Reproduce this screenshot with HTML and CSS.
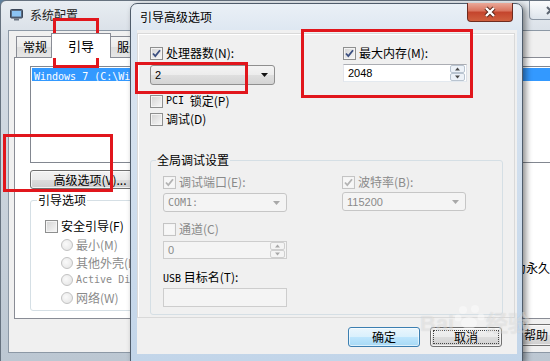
FILE: index.html
```html
<!DOCTYPE html>
<html lang="zh-CN">
<head>
  <meta charset="UTF-8">
  <title>系统配置 - 引导高级选项</title>
  <link rel="stylesheet" href="styles.css">
</head>
<body>
  <div class="desktop">

    <div class="win back">
      <div class="titlebar">
        <svg class="app-icon" width="13" height="13" viewBox="0 0 13 13">
          <rect x="0.5" y="1.5" width="12" height="8.5" rx="1" fill="#5a6a80" stroke="#3a4658"/>
          <rect x="2" y="3" width="9" height="5.5" fill="#8cc4f4"/>
          <rect x="4" y="10.5" width="5" height="2" fill="#6c7684"/>
        </svg>
        <span class="title">系统配置</span>
        <span class="cap-close">
          <svg width="11" height="9" viewBox="0 0 11 9"><path d="M2 1l7 7M9 1L2 8" stroke="#5b6470" stroke-width="2"/></svg>
        </span>
      </div>
      <div class="client">
        <div class="tabs">
          <span class="tab">常规</span>
          <span class="tab on">引导</span>
          <span class="tab">服务</span>
          <span class="tab">启动</span>
          <span class="tab">工具</span>
        </div>
        <div class="tabpage">
          <div class="listbox">
            <div class="item sel"><span class="mono">Windows 7 (C:\Windows) : </span>当前操作系统; 默认操作系统</div>
          </div>
          <div class="btnrow">
            <button class="btn adv">高级选项(<u>V</u>)...</button>
            <button class="btn">设为默认值(S)</button>
            <button class="btn">删除(D)</button>
          </div>
          <div class="bootrow">
            <fieldset class="group boot">
              <legend>引导选项</legend>
              <label class="check"><span class="cb"></span>安全引导(F)</label>
              <div class="radios">
                <label class="radio"><span class="rb"></span>最小(M)</label>
                <label class="radio"><span class="rb"></span>其他外壳(L)</label>
                <label class="radio"><span class="rb"></span><span class="mono">Active Directory</span>修复(V)</label>
                <label class="radio"><span class="rb"></span>网络(W)</label>
              </div>
            </fieldset>
            <div class="bootside">
              <label class="check"><span class="cb"></span>使所有引导设置成为永久(K)</label>
            </div>
          </div>
        </div>
        <div class="footer">
          <button class="btn">确定</button>
          <button class="btn">取消</button>
          <button class="btn">应用(A)</button>
          <button class="btn help">帮助</button>
        </div>
      </div>
    </div>

    <div class="win dlg">
      <div class="titlebar">
        <span class="title">引导高级选项</span>
        <span class="close">
          <svg width="14" height="12" viewBox="0 0 14 12">
            <path d="M3 2l8 8M11 2l-8 8" stroke="#5a2418" stroke-width="4.2"/>
            <path d="M3 2l8 8M11 2l-8 8" stroke="#fff" stroke-width="2.4"/>
          </svg>
        </span>
      </div>
      <div class="client">
        <div class="panel">
          <div class="cols top">
            <div class="col">
              <label class="check">
                <span class="cb"><svg viewBox="0 0 11 11"><path d="M2 5.5l2.3 2.6L9 2.3" fill="none" stroke="#3b4f80" stroke-width="1.8"/></svg></span>处理器数(N):
              </label>
              <div class="combo cpu">
                <span>2</span>
                <svg width="7" height="4" viewBox="0 0 7 4"><path d="M0 0h7L3.5 4z" fill="#111"/></svg>
              </div>
              <label class="check pci"><span class="cb"></span><span class="mono">PCI</span>&nbsp;锁定(P)</label>
              <label class="check dbg"><span class="cb"></span>调试(D)</label>
            </div>
            <div class="col">
              <label class="check">
                <span class="cb"><svg viewBox="0 0 11 11"><path d="M2 5.5l2.3 2.6L9 2.3" fill="none" stroke="#3b4f80" stroke-width="1.8"/></svg></span>最大内存(M):
              </label>
              <div class="spin mem">
                <span>2048</span>
                <svg width="15" height="16" viewBox="0 0 15 16">
                  <rect x="0.5" y="0.5" width="14" height="7" rx="1.5" fill="#edf2f8" stroke="#b9c4d0"/>
                  <rect x="0.5" y="8.5" width="14" height="7" rx="1.5" fill="#edf2f8" stroke="#b9c4d0"/>
                  <path d="M5 5.5l2.5-3 2.5 3z" fill="#4a4a4a"/>
                  <path d="M5 10.5l2.5 3 2.5-3z" fill="#4a4a4a"/>
                </svg>
              </div>
            </div>
          </div>

          <fieldset class="group gd">
            <legend>全局调试设置</legend>
            <div class="cols inner">
              <div class="col">
                <label class="check off">
                  <span class="cb"><svg viewBox="0 0 11 11"><path d="M2 5.5l2.3 2.6L9 2.3" fill="none" stroke="#b4b4b4" stroke-width="1.8"/></svg></span>调试端口(E):
                </label>
                <div class="combo off port">
                  <span class="mono">COM1:</span>
                  <svg width="7" height="4" viewBox="0 0 7 4"><path d="M0 0h7L3.5 4z" fill="#a8a8a8"/></svg>
                </div>
                <label class="check off chan"><span class="cb"></span>通道(C)</label>
                <div class="spin off chanbox">
                  <span>0</span>
                  <svg width="15" height="16" viewBox="0 0 15 16">
                    <rect x="0.5" y="0.5" width="14" height="7" rx="1.5" fill="#f4f4f4" stroke="#cfcfcf"/>
                    <rect x="0.5" y="8.5" width="14" height="7" rx="1.5" fill="#f4f4f4" stroke="#cfcfcf"/>
                    <path d="M5 5.5l2.5-3 2.5 3z" fill="#a8a8a8"/>
                    <path d="M5 10.5l2.5 3 2.5-3z" fill="#a8a8a8"/>
                  </svg>
                </div>
                <div class="lbl usb"><span class="mono">USB</span>&nbsp;目标名(T):</div>
                <div class="textbox off usbbox"></div>
              </div>
              <div class="col">
                <label class="check off">
                  <span class="cb"><svg viewBox="0 0 11 11"><path d="M2 5.5l2.3 2.6L9 2.3" fill="none" stroke="#b4b4b4" stroke-width="1.8"/></svg></span>波特率(B):
                </label>
                <div class="combo off baud">
                  <span>115200</span>
                  <svg width="7" height="4" viewBox="0 0 7 4"><path d="M0 0h7L3.5 4z" fill="#a8a8a8"/></svg>
                </div>
              </div>
            </div>
          </fieldset>
        </div>
        <div class="dlgbtns">
          <button class="btn default">确定</button>
          <button class="btn focus">取消</button>
        </div>
      </div>
    </div>

    <div class="watermark">Bai<svg width="30" height="26" viewBox="0 0 30 26">
        <circle cx="8" cy="6" r="4"/><circle cx="20" cy="5" r="4"/><circle cx="3" cy="14" r="3.5"/><circle cx="26" cy="13" r="3.5"/><ellipse cx="14" cy="19" rx="8" ry="6"/>
      </svg>经验</div>

    <div class="mark m-tab"></div>
    <div class="mark m-adv"></div>
    <div class="mark m-cpu"></div>
    <div class="mark m-mem"></div>
  </div>
</body>
</html>
```

FILE: styles.css
```css
* {
  box-sizing: border-box;
}
body {
  margin: 0;
  background: #5f7f9c;
  font: 12px/14px "Noto Sans CJK SC", "Liberation Sans", sans-serif;
  color: #000;
}
button {
  font: inherit;
  color: inherit;
  padding: 0;
}
u {
  text-decoration: none;
}
.mono {
  font-family: "DejaVu Sans Mono", "Liberation Mono", monospace;
  font-size: 10px;
}
.desktop {
  position: relative;
  width: 550px;
  height: 361px;
  overflow: hidden;
}

/* windows */
.win {
  position: absolute;
  display: flex;
  flex-direction: column;
}
.titlebar {
  display: flex;
  align-items: flex-start;
  flex: none;
}
.title {
  white-space: nowrap;
}

.back {
  left: 0;
  top: 0;
  width: 580px;
  height: 362px;
  padding: 0 7px 8px;
  border: 1px solid #66727f;
  border-radius: 6px 6px 0 0;
  background: linear-gradient(#e8edf2, #d6dde5 40px, #bcc7d2);
}
.back .titlebar {
  height: 29px;
}
.app-icon {
  margin: 7px 7px 0 2px;
}
.back .title {
  line-height: 28px;
  color: #222;
}
.cap-close {
  margin-left: auto;
  width: 43px;
  height: 19px;
  display: flex;
  align-items: center;
  justify-content: center;
  border: 1px solid #8995a3;
  border-top: 0;
  border-radius: 0 0 4px 4px;
  background: linear-gradient(rgba(255,255,255,.8), rgba(220,228,236,.6));
}
.back .client {
  flex: 1;
  display: flex;
  flex-direction: column;
  background: #f0f0f0;
  border: 1px solid #8c98a5;
  padding-left: 5px;
}

/* tab control */
.tabs {
  display: flex;
  align-items: flex-end;
  height: 26px;
  padding-left: 2px;
}
.tab {
  height: 21px;
  line-height: 19px;
  padding: 0 6px;
  border: 1px solid #898c95;
  border-bottom: 0;
  margin-right: -1px;
  white-space: nowrap;
  background: linear-gradient(#f4f4f4, #ebebeb 50%, #dedede 50%, #e6e6e6);
}
.tab.on {
  position: relative;
  z-index: 1;
  height: 25px;
  width: 60px;
  margin: 0 -1px -1px -2px;
  text-align: center;
  line-height: 24px;
  font-size: 13px;
  background: #fff;
}
.tab.on + .tab {
  width: 50px;
}
.tabpage {
  height: 262px;
  flex: none;
  border: 1px solid #898c95;
  background: #fff;
  padding: 8px 15px;
}
.listbox {
  height: 97px;
  border: 1px solid #828790;
  background: #fff;
  padding: 1px;
}
.item {
  height: 13px;
  line-height: 13px;
  padding-left: 2px;
  white-space: nowrap;
  overflow: hidden;
}
.item.sel {
  background: #3399ff;
  color: #fff;
}
.btnrow {
  display: flex;
  gap: 8px;
  margin-top: 7px;
}
.btn {
  height: 19px;
  border: 1px solid #707070;
  border-radius: 3px;
  background: linear-gradient(#f2f2f2, #ebebeb 50%, #dddddd 50%, #cfcfcf);
  box-shadow: inset 0 0 0 1px rgba(255,255,255,.7);
  white-space: nowrap;
}
.btn.adv {
  width: 120px;
}
.btnrow .btn {
  padding: 0 14px;
}
.bootrow {
  display: flex;
  margin-top: 4px;
}

/* group boxes */
.group {
  margin: 0;
  min-width: 0;
  border: 1px solid #d5dfe5;
  border-radius: 3px;
}
.group legend {
  padding: 0 1px;
  line-height: 14px;
}
.boot {
  width: 215px;
  flex: none;
  padding: 12px 8px 5px 6px;
}
.boot > .check {
  margin-left: 8px;
}
.radios {
  margin-left: 24px;
  display: flex;
  flex-direction: column;
  gap: 3.5px;
  margin-top: 5px;
  white-space: nowrap;
}
.radio {
  display: flex;
  align-items: center;
  gap: 3px;
  height: 14px;
  color: #8a8a8a;
}
.rb {
  flex: none;
  width: 12px;
  height: 12px;
  border-radius: 50%;
  border: 1px solid #c2c2c2;
  background: radial-gradient(circle at 40% 40%, #fafafa, #e2e2e2);
}
.bootside {
  flex: 1;
  padding: 68px 0 0 157px;
  white-space: nowrap;
}
.footer {
  flex: 1;
  display: flex;
  justify-content: flex-end;
  align-items: flex-start;
  gap: 6px;
  padding: 5px 2px 0 0;
}
.footer .btn {
  width: 66px;
  height: 22px;
}

/* checkbox */
.check {
  display: flex;
  align-items: center;
  gap: 3px;
  height: 14px;
  white-space: nowrap;
}
.cb {
  flex: none;
  width: 13px;
  height: 13px;
  border: 1px solid #8e8f8f;
  background: linear-gradient(135deg, #d3d3d3, #f8f8f8);
  box-shadow: inset 0 0 0 1px #f4f4f4;
  display: flex;
  align-items: center;
  justify-content: center;
}
.cb svg {
  width: 11px;
  height: 11px;
}
.check.off {
  color: #8a8a8a;
}
.check.off .cb {
  border-color: #c4c4c4;
  background: #f7f7f7;
}

/* front dialog */
.dlg {
  left: 130px;
  top: 3px;
  width: 393px;
  height: 359px;
  padding: 0 5px 7px 6px;
  border: 1px solid #4f5c6b;
  border-radius: 7px 7px 0 0;
  background: linear-gradient(#eaf0f6, #dce6f1 30px, #c2d5e9);
  box-shadow: 3px 2px 6px rgba(0,0,0,.45);
}
.dlg .titlebar {
  height: 26px;
}
.dlg .title {
  padding-left: 3px;
  line-height: 26px;
}
.close {
  margin: -1px 4px 0 auto;
  width: 46px;
  height: 19px;
  display: flex;
  align-items: center;
  justify-content: center;
  border: 1px solid #6e2b20;
  border-top: 0;
  border-radius: 0 0 4px 4px;
  background: linear-gradient(#eaa899, #d9735d 45%, #c4442c 50%, #d0603f);
}
.dlg .client {
  flex: 1;
  display: flex;
  flex-direction: column;
  background: #f0f0f0;
}
.panel {
  margin: 3px 2px 0 0;
  border: 1px solid #d9d9d9;
  box-shadow: inset 1px 1px #fff;
  padding: 12px 11px 2px 12px;
}
.cols {
  display: grid;
  align-items: start;
}
.cols.top {
  grid-template-columns: 125px 124px;
  column-gap: 68px;
}
.cols.inner {
  grid-template-columns: 124px 124px;
  column-gap: 55px;
}
.col {
  display: flex;
  flex-direction: column;
}

.combo,
.spin,
.textbox {
  display: flex;
  align-items: center;
  justify-content: space-between;
  padding: 0 4px;
  white-space: nowrap;
}
.combo {
  border: 1px solid #8f8f8f;
  border-radius: 3px;
  background: linear-gradient(#f4f4f4, #ececec 50%, #dfdfdf 50%, #d4d4d4);
  font-family: "Liberation Sans", sans-serif;
  font-size: 11px;
}
.combo svg {
  margin-right: 2px;
}
.combo.off {
  border-color: #c6c6c6;
  background: #f4f4f4;
  color: #8a8a8a;
}
.spin {
  border: 1px solid #abadb3;
  border-color: #abadb3 #dbdfe6 #e3e9ef #e2e3ea;
  background: #fff;
  padding-right: 1px;
  font-family: "Liberation Sans", sans-serif;
  font-size: 11px;
}
.spin.off,
.textbox.off {
  border: 1px solid #cdcdcd;
  background: #f4f4f4;
  color: #8a8a8a;
}
.cpu {
  height: 20px;
  margin-top: 5px;
}
.pci {
  margin-top: 9px;
}
.dbg {
  margin-top: 4px;
}
.mem {
  height: 18px;
  margin-top: 4px;
}

.gd {
  margin-top: 27px;
  padding: 8px 12px 7px;
}
.gd legend {
  margin-left: -7px;
}
.port {
  height: 19px;
  margin-top: 4px;
}
.chan {
  margin-top: 10px;
}
.chanbox {
  height: 18px;
  margin-top: 5px;
}
.usb {
  margin-top: 11px;
  height: 14px;
  white-space: nowrap;
}
.usbbox {
  height: 19px;
  margin-top: 4px;
}
.baud {
  height: 19px;
  margin-top: 3px;
}

.dlgbtns {
  display: flex;
  justify-content: flex-end;
  gap: 10px;
  margin-top: 9px;
  padding-right: 15px;
}
.dlgbtns .btn {
  width: 72px;
  height: 20px;
}
.btn.default {
  border-color: #3c7fb1;
  background: linear-gradient(#eaf6fd, #d9f0fc 50%, #bee6fd 50%, #a7d9f5);
  box-shadow: inset 0 0 0 1px rgba(255,255,255,.6);
}
.btn.focus {
  outline: 1px dotted #444;
  outline-offset: -4px;
}

/* overlays */
.watermark {
  position: absolute;
  left: 420px;
  top: 304px;
  display: flex;
  align-items: flex-end;
  font: bold 22px/24px "Liberation Sans", sans-serif;
  color: rgba(255,255,255,.4);
  text-shadow: 0 0 1px rgba(0,0,0,.12);
  pointer-events: none;
}
.watermark svg {
  fill: rgba(255,255,255,.4);
  margin: 0 1px 6px;
}
.mark {
  position: absolute;
  border: 3px solid #e1161c;
}
.m-tab {
  left: 53px;
  top: 18px;
  width: 46px;
  height: 50px;
}
.m-adv {
  left: 3px;
  top: 134px;
  width: 110px;
  height: 58px;
}
.m-cpu {
  left: 135px;
  top: 62px;
  width: 113px;
  height: 32px;
}
.m-mem {
  left: 301px;
  top: 29px;
  width: 172px;
  height: 69px;
}
```
